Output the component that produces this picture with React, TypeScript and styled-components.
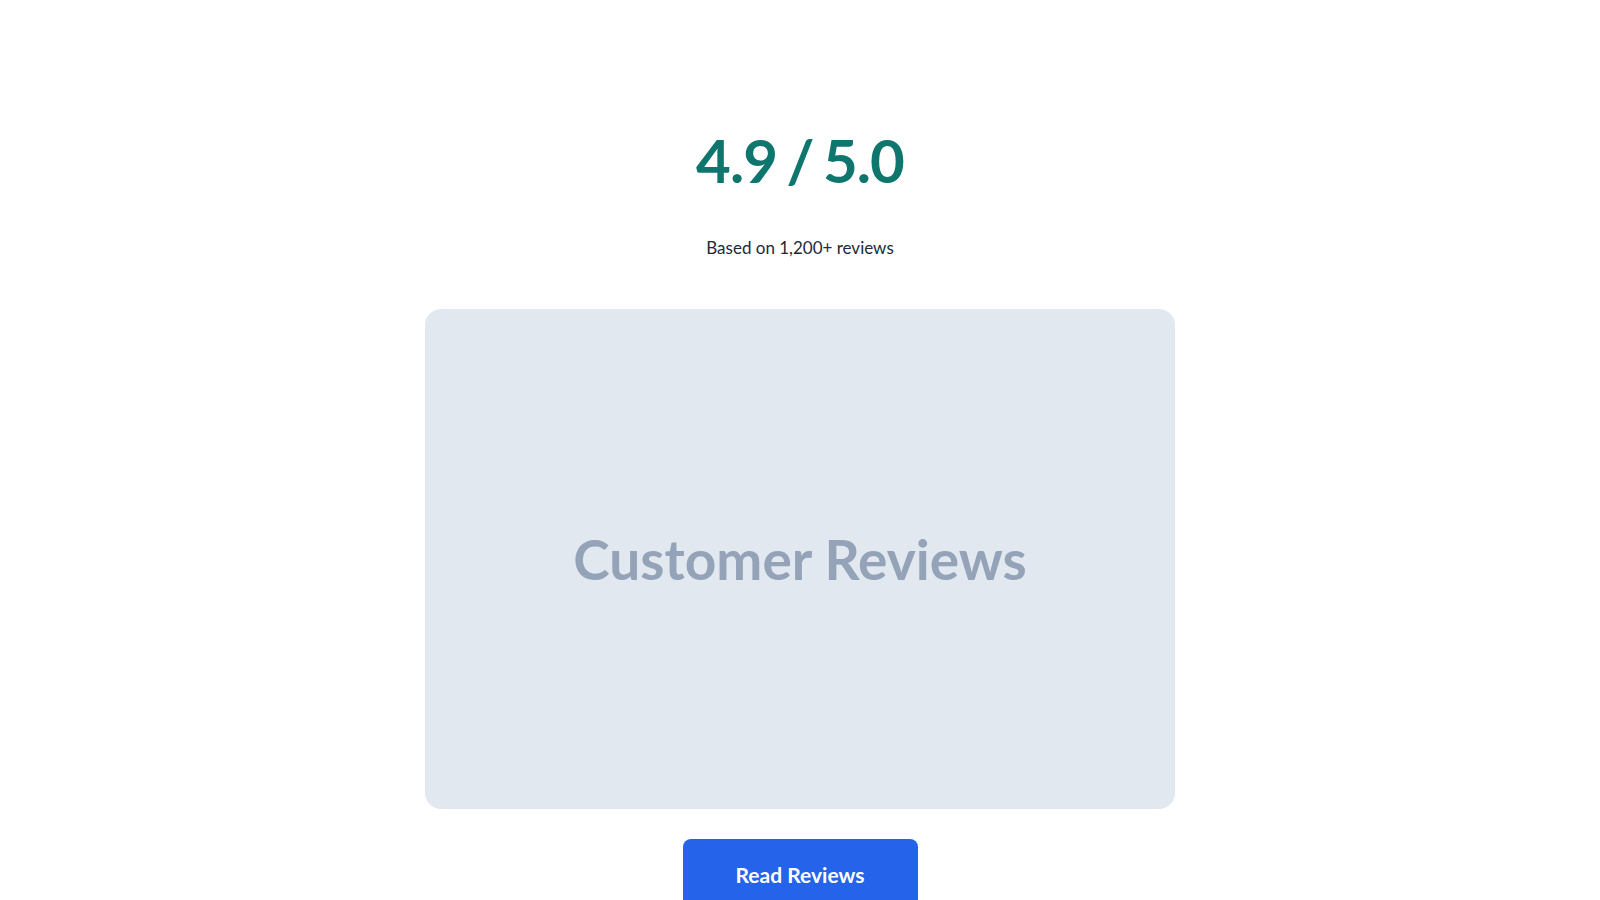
import styled, { createGlobalStyle } from 'styled-components';

const GlobalStyle = createGlobalStyle`
  html, body {
    margin: 0;
    padding: 0;
    background: #ffffff;
    font-family: Lato, "Noto Sans", sans-serif;
  }
`;

const App = () => {
  return (
    <>
      <GlobalStyle />
      <Page>
        <Score>4.9 / 5.0</Score>
        <Caption>Based on 1,200+ reviews</Caption>
        <Placeholder>
          <PlaceholderLabel>Customer Reviews</PlaceholderLabel>
        </Placeholder>
        <ReadButton>Read Reviews</ReadButton>
      </Page>
    </>
  );
};

export default App;

const Page = styled.main`
  display: flex;
  flex-direction: column;
  align-items: center;
  padding-top: 124px;
  height: 900px;
  box-sizing: border-box;
  overflow: hidden;
`;

const Score = styled.h1`
  margin: 0;
  font-family: Lato, sans-serif;
  font-size: 60px;
  line-height: 72px;
  font-weight: 700;
  color: #0f766e;
  letter-spacing: -1px;
  word-spacing: -4px;
`;

const Caption = styled.p`
  margin: 40px 0 0;
  font-family: Lato, sans-serif;
  font-size: 17px;
  line-height: 24px;
  color: #1e293b;
`;

const Placeholder = styled.div`
  flex-shrink: 0;
  margin-top: 49px;
  width: 750px;
  height: 500px;
  border-radius: 16px;
  background: #e2e8f0;
  display: flex;
  align-items: center;
  justify-content: center;
`;

const PlaceholderLabel = styled.span`
  font-family: Lato, sans-serif;
  font-size: 55px;
  font-weight: 700;
  color: #94a3b8;
`;

const ReadButton = styled.button`
  margin-top: 30px;
  flex-shrink: 0;
  width: 235px;
  height: 70px;
  border: none;
  border-radius: 8px;
  background: #2563eb;
  color: #ffffff;
  font-family: Lato, sans-serif;
  font-size: 21px;
  font-weight: 700;
  cursor: pointer;
`;
